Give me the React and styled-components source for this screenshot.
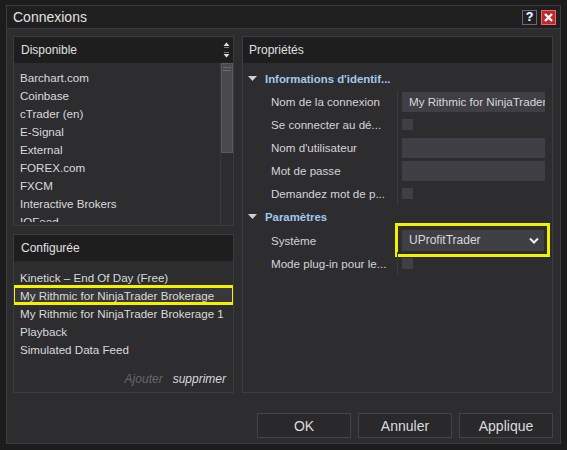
import React from 'react';
import styled, { createGlobalStyle } from 'styled-components';

const Global = createGlobalStyle`
  html, body { margin: 0; padding: 0; background: #1c1c1d; }
  body {
    font-family: "Liberation Sans", Arial, sans-serif;
    font-size: 11.6px;
    color: #dcdcdc;
  }
`;

const Page = styled.div`
  width: 567px;
  height: 450px;
  box-sizing: border-box;
  padding: 5px 0 0 6px;
`;

const Window = styled.div`
  width: 555px;
  height: 439px;
  box-sizing: border-box;
  border: 1px solid #3d3d40;
  background: #2d2d30;
  display: flex;
  flex-direction: column;
`;

const TitleBar = styled.div`
  height: 22px;
  flex: none;
  background: #1f1f20;
  border-bottom: 1px solid #3a3a3d;
  display: flex;
  align-items: center;
  padding: 0 4px 0 6px;
`;

const Title = styled.div`
  flex: 1;
  font-size: 14px;
  color: #e2e2e2;
`;

const TitleButtons = styled.div`
  display: flex;
  gap: 4px;
`;

const TitleBtn = styled.div`
  width: 15px;
  height: 15px;
  box-sizing: border-box;
  display: flex;
  align-items: center;
  justify-content: center;
  border: 1px solid ${p => (p.$danger ? '#e07070' : '#6a6a6a')};
  background: ${p => (p.$danger ? '#c3252b' : '#202020')};
  color: #f4f6ff;
  font-weight: bold;
  font-size: 12px;
  line-height: 1;
  text-shadow: 1px 0 0 #4a7ad0;
`;

const Body = styled.div`
  flex: 1;
  display: flex;
  flex-direction: column;
  padding: 7px 7px 5px 6px;
`;

const Main = styled.div`
  height: 357px;
  display: grid;
  grid-template-columns: 221px 311px;
  gap: 8px;
`;

const LeftCol = styled.div`
  display: flex;
  flex-direction: column;
  gap: 8px;
`;

const Panel = styled.div`
  height: ${p => p.$h || 'auto'};
  box-sizing: border-box;
  border: 1px solid #3c3c3f;
  background: #2d2d30;
  display: flex;
  flex-direction: column;
  overflow: hidden;
`;

const PanelHeader = styled.div`
  height: 26px;
  flex: none;
  background: #1e1e1f;
  display: flex;
  align-items: center;
  padding-left: ${p => p.$pl || 6}px;
  color: #e0e0e0;
  font-size: 12px;
`;

const HeaderText = styled.div`
  flex: 1;
`;

const ScrollArrows = styled.div`
  width: 13px;
  height: 100%;
  display: flex;
  align-items: center;
  justify-content: center;
`;

const ListArea = styled.div`
  flex: 1;
  display: flex;
  min-height: 0;
`;

const List = styled.div`
  flex: 1;
  overflow: hidden;
  padding-top: ${p => p.$pt || 6}px;
  margin-bottom: ${p => p.$mb || 0}px;
`;

const Item = styled.div`
  position: relative;
  height: 18px;
  line-height: 18px;
  padding-left: 6px;
  white-space: nowrap;
  color: #dadada;
  background: ${p => (p.$selected ? '#38383c' : 'transparent')};
  &::after {
    content: '';
    display: ${p => (p.$marked ? 'block' : 'none')};
    position: absolute;
    left: -2px;
    right: -2px;
    top: -2px;
    bottom: 0;
    border: 3px solid #f2f200;
  }
`;

const Track = styled.div`
  width: 13px;
  flex: none;
  border-left: 1px solid #3a3a3d;
  box-sizing: border-box;
`;

const Thumb = styled.div`
  height: 90px;
  box-sizing: border-box;
  background: #4a4a4d;
  border: 1px solid #5a5a5d;
  padding-top: 3px;
  display: flex;
  flex-direction: column;
  align-items: center;
  gap: 2px;
`;

const Grip = styled.div`
  width: 8px;
  height: 1px;
  background: #6a6a6d;
`;

const ListFooter = styled.div`
  display: flex;
  justify-content: flex-end;
  gap: 10px;
  height: 18px;
  line-height: 18px;
  padding: 0 7px 4px 0;
  font-style: italic;
  font-size: 12px;
`;

const FooterLink = styled.span`
  color: ${p => (p.$disabled ? '#68686b' : '#d8d8da')};
`;

const PropGrid = styled.div`
  padding-top: 4px;
  display: flex;
  flex-direction: column;
`;

const CategoryRow = styled.div`
  height: 23px;
  display: flex;
  align-items: center;
  padding-left: 5px;
  gap: 8px;
  font-weight: bold;
  font-size: 11.4px;
  color: #a3c8ee;
`;

const PropRow = styled.div`
  height: ${p => p.$h || 23}px;
  display: grid;
  grid-template-columns: 154px 1fr;
`;

const PropLabel = styled.div`
  display: flex;
  align-items: center;
  padding-left: 28px;
  color: #d4d4d6;
  white-space: nowrap;
  overflow: hidden;
`;

const PropValue = styled.div`
  position: relative;
  border-left: 1px solid #3b3b3e;
  display: flex;
  align-items: center;
  padding-left: 4px;
`;

const TextBox = styled.div`
  width: 143px;
  height: 20px;
  box-sizing: border-box;
  background: #3f3f45;
  padding-left: 7px;
  line-height: 20px;
  white-space: nowrap;
  overflow: hidden;
  color: #d8d8da;
`;

const Check = styled.div`
  width: 11px;
  height: 11px;
  background: #3f3f45;
  margin-top: -1px;
`;

const Select = styled.div`
  width: 142px;
  height: 21px;
  box-sizing: border-box;
  background: #3f3f45;
  display: flex;
  align-items: center;
  justify-content: space-between;
  padding: 0 5px 0 7px;
  color: #d8d8da;
  font-size: 12px;
`;

const Marker = styled.div`
  position: absolute;
  left: -3px;
  right: 2px;
  top: -5px;
  bottom: -5px;
  border: 3px solid #f2f200;
  pointer-events: none;
`;

const Footer = styled.div`
  margin-top: auto;
  display: flex;
  justify-content: flex-end;
  gap: 7px;
`;

const Button = styled.div`
  width: 94px;
  height: 25px;
  box-sizing: border-box;
  border: 1px solid #444447;
  background: #29292b;
  display: flex;
  align-items: center;
  justify-content: center;
  font-size: 14px;
  color: #dcdcde;
`;

const Tri = () => (
  <svg width="9" height="6" viewBox="0 0 9 6">
    <path d="M0 0 L9 0 L4.5 5 Z" fill="#d0d0d2" />
  </svg>
);

const available = [
  'Barchart.com',
  'Coinbase',
  'cTrader (en)',
  'E-Signal',
  'External',
  'FOREX.com',
  'FXCM',
  'Interactive Brokers',
  'IQFeed',
];

const configured = [
  'Kinetick – End Of Day (Free)',
  'My Rithmic for NinjaTrader Brokerage',
  'My Rithmic for NinjaTrader Brokerage 1',
  'Playback',
  'Simulated Data Feed',
];

export default function App() {
  return (
    <Page>
      <Global />
      <Window>
        <TitleBar>
          <Title>Connexions</Title>
          <TitleButtons>
            <TitleBtn>?</TitleBtn>
            <TitleBtn $danger>
              <svg width="9" height="9" viewBox="0 0 9 9">
                <path d="M1 1 L8 8 M8 1 L1 8" stroke="#fff" strokeWidth="2.4" />
              </svg>
            </TitleBtn>
          </TitleButtons>
        </TitleBar>
        <Body>
          <Main>
            <LeftCol>
              <Panel $h="190px">
                <PanelHeader $pl={7}>
                  <HeaderText>Disponible</HeaderText>
                  <ScrollArrows>
                    <svg width="7" height="20" viewBox="0 0 7 20">
                      <path d="M0.5 6 L6.5 6 L3.5 2.5 Z" fill="#e0e0e0" />
                      <path d="M0.5 14 L6.5 14 L3.5 17.5 Z" fill="#e0e0e0" />
                      <path d="M1 7.5 H6 M1 12.5 H6" stroke="#7a7a7a" strokeWidth="1" />
                    </svg>
                  </ScrollArrows>
                </PanelHeader>
                <ListArea>
                  <List $mb={3}>
                    {available.map(n => (
                      <Item key={n}>{n}</Item>
                    ))}
                  </List>
                  <Track>
                    <Thumb>
                      <Grip />
                      <Grip />
                    </Thumb>
                  </Track>
                </ListArea>
              </Panel>
              <Panel $h="159px">
                <PanelHeader $pl={7}>
                  <HeaderText>Configurée</HeaderText>
                </PanelHeader>
                <List $pt={8}>
                  {configured.map((n, i) => (
                    <Item key={n} $selected={i === 1} $marked={i === 1}>
                      {n}
                    </Item>
                  ))}
                </List>
                <ListFooter>
                  <FooterLink $disabled>Ajouter</FooterLink>
                  <FooterLink>supprimer</FooterLink>
                </ListFooter>
              </Panel>
            </LeftCol>
            <Panel $h="357px">
              <PanelHeader $pl={6}>
                <HeaderText>Propriétés</HeaderText>
              </PanelHeader>
              <PropGrid>
                <CategoryRow>
                  <Tri />
                  <span>Informations d'identif...</span>
                </CategoryRow>
                <PropRow>
                  <PropLabel>Nom de la connexion</PropLabel>
                  <PropValue>
                    <TextBox>My Rithmic for NinjaTrader Brokerage</TextBox>
                  </PropValue>
                </PropRow>
                <PropRow>
                  <PropLabel>Se connecter au dé...</PropLabel>
                  <PropValue>
                    <Check />
                  </PropValue>
                </PropRow>
                <PropRow>
                  <PropLabel>Nom d'utilisateur</PropLabel>
                  <PropValue>
                    <TextBox />
                  </PropValue>
                </PropRow>
                <PropRow>
                  <PropLabel>Mot de passe</PropLabel>
                  <PropValue>
                    <TextBox />
                  </PropValue>
                </PropRow>
                <PropRow>
                  <PropLabel>Demandez mot de p...</PropLabel>
                  <PropValue>
                    <Check />
                  </PropValue>
                </PropRow>
                <CategoryRow>
                  <Tri />
                  <span>Paramètres</span>
                </CategoryRow>
                <PropRow $h={24}>
                  <PropLabel>Système</PropLabel>
                  <PropValue>
                    <Select>
                      <span>UProfitTrader</span>
                      <svg width="10" height="7" viewBox="0 0 10 7">
                        <path d="M1 1.5 L5 5.5 L9 1.5" stroke="#f0f0f0" strokeWidth="2" fill="none" />
                      </svg>
                    </Select>
                    <Marker />
                  </PropValue>
                </PropRow>
                <PropRow>
                  <PropLabel>Mode plug-in pour le...</PropLabel>
                  <PropValue>
                    <Check />
                  </PropValue>
                </PropRow>
              </PropGrid>
            </Panel>
          </Main>
          <Footer>
            <Button>OK</Button>
            <Button>Annuler</Button>
            <Button>Applique</Button>
          </Footer>
        </Body>
      </Window>
    </Page>
  );
}
